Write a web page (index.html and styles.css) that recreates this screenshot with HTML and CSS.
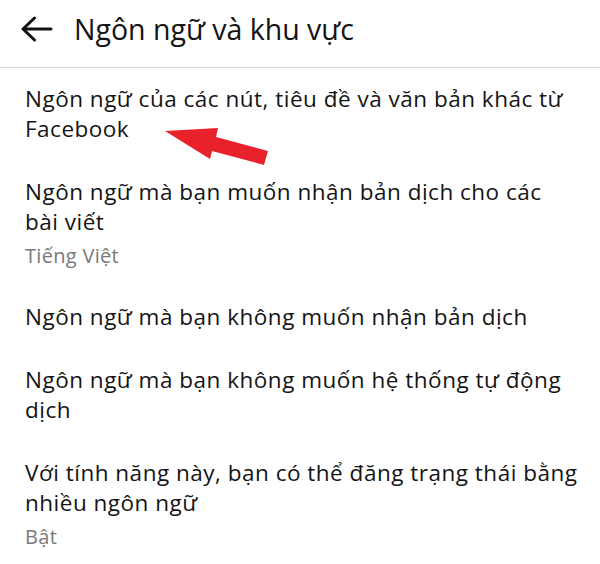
FILE: index.html
```html
<!DOCTYPE html>
<html lang="vi">
<head>
<meta charset="utf-8">
<link rel="stylesheet" href="styles.css">
</head>
<body>
<div class="screen">
  <header class="topbar">
    <svg class="back" width="32" height="26" viewBox="0 0 32 26">
      <path d="M2 13 H30 M13.5 2 L2 13 L13.5 24" fill="none" stroke="#111" stroke-width="3" stroke-linecap="round" stroke-linejoin="round"/>
    </svg>
    <h1 class="title">Ngôn ngữ và khu vực</h1>
  </header>
  <ul class="list">
    <li class="item">
      <div class="label">Ngôn ngữ của các nút, tiêu đề và văn bản khác từ Facebook</div>
    </li>
    <li class="item">
      <div class="label">Ngôn ngữ mà bạn muốn nhận bản dịch cho các <span class="keep">bài viết</span></div>
      <div class="value">Tiếng Việt</div>
    </li>
    <li class="item">
      <div class="label">Ngôn ngữ mà bạn không muốn nhận bản dịch</div>
    </li>
    <li class="item">
      <div class="label">Ngôn ngữ mà bạn không muốn hệ thống tự động dịch</div>
    </li>
    <li class="item">
      <div class="label">Với tính năng này, bạn có thể đăng trạng thái bằng nhiều ngôn ngữ</div>
      <div class="value">Bật</div>
    </li>
  </ul>
  <svg class="pointer" width="600" height="564" viewBox="0 0 600 564">
    <polygon points="165,131 218,128 216,137 268,151 264,165 212,151 210,159" fill="#e8212b"/>
  </svg>
</div>
</body>
</html>
```
FILE: styles.css
```css
html, body {
  margin: 0;
  padding: 0;
  background: #fff;
}
body {
  font-family: "Open Sans", "Noto Sans", sans-serif;
  color: #141414;
}
.screen {
  position: relative;
  width: 600px;
  height: 564px;
  overflow: hidden;
}
.topbar {
  height: 68px;
  box-sizing: border-box;
  padding: 0 0 9px 21px;
  display: flex;
  align-items: center;
  gap: 21px;
  border-bottom: 1px solid #d6d6d6;
}
.back {
  display: block;
  flex: none;
}
.title {
  margin: 0;
  font-size: 28.5px;
  line-height: 28px;
  font-weight: 400;
}
.list {
  list-style: none;
  margin: 0;
  padding: 0;
}
.item {
  padding: 16px 16px 17px 25px;
}
.label {
  font-size: 22.5px;
  line-height: 30px;
  font-weight: 500;
  letter-spacing: 0.5px;
}
.keep {
  white-space: nowrap;
}
.value {
  margin-top: 6px;
  font-size: 20px;
  line-height: 26px;
  letter-spacing: 0.3px;
  color: #787878;
}
.pointer {
  position: absolute;
  left: 0;
  top: 0;
  pointer-events: none;
}
```
